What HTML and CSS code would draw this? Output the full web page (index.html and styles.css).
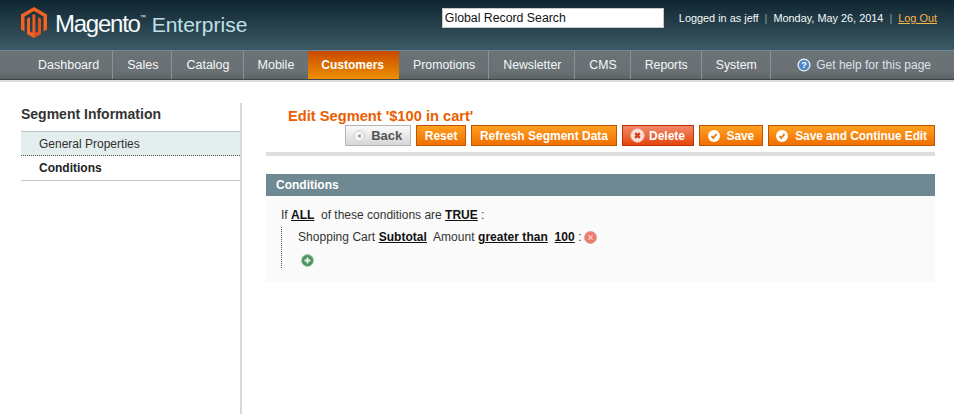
FILE: index.html
```html
<!DOCTYPE html>
<html lang="en">
<head>
<meta charset="utf-8">
<title>Edit Segment</title>
<link rel="stylesheet" href="styles.css">
</head>
<body>
<header class="header">
  <div class="brand">
    <svg class="logo" width="26" height="31" viewBox="0 0 26 31">
      <path fill="#f26322" d="M13 0 L26 7.5 V22.5 L22.5 24.5 V9.5 L13 4 L3.5 9.5 V24.5 L0 22.5 V7.5 Z"/>
      <path fill="#f26322" d="M11.5 7.8 L13 7 V31 L6 27 V11.8 L9 10 V24.5 L11.5 26 Z"/>
      <path fill="#dd5518" d="M13 7 L14.5 7.8 V26 L17 24.5 V10 L20 11.8 V27 L13 31 Z"/>
    </svg>
    <span class="brand-name">Magento<sup class="tm">™</sup></span>
    <span class="brand-sub">Enterprise</span>
  </div>
  <div class="header-right">
    <div class="search">Global Record Search</div>
    <div class="userinfo">
      <span>Logged in as jeff</span><span class="sep">|</span><span>Monday, May 26, 2014</span><span class="sep">|</span><a class="logout" href="#">Log Out</a>
    </div>
  </div>
</header>
<nav class="nav">
  <ul class="menu">
    <li class="item">Dashboard</li>
    <li class="item">Sales</li>
    <li class="item">Catalog</li>
    <li class="item item-plain">Mobile</li>
    <li class="item active">Customers</li>
    <li class="item">Promotions</li>
    <li class="item">Newsletter</li>
    <li class="item">CMS</li>
    <li class="item">Reports</li>
    <li class="item">System</li>
  </ul>
  <a class="help" href="#">
    <svg width="14" height="14" viewBox="0 0 14 14"><circle cx="7" cy="7" r="6.5" fill="#e8f0f8"/><circle cx="7" cy="7" r="5.2" fill="#4f86c6"/><text x="7" y="10.2" class="help-q" text-anchor="middle">?</text></svg>
    <span>Get help for this page</span>
  </a>
</nav>
<main class="page">
  <aside class="side">
    <h3 class="side-title">Segment Information</h3>
    <ul class="tabs">
      <li class="tab tab-first">General Properties</li>
      <li class="tab tab-on">Conditions</li>
    </ul>
  </aside>
  <section class="content">
    <div class="head">
      <h3 class="title">Edit Segment '$100 in cart'</h3>
      <div class="actions">
        <button class="btn btn-back"><svg width="14" height="14" viewBox="0 0 14 14"><circle cx="7" cy="7" r="6" fill="#f4f4f4" stroke="#c4c4c4"/><path d="M8.5 4.7V9.3L5 7Z" fill="#888"/></svg><span>Back</span></button>
        <button class="btn btn-reset">Reset</button>
        <button class="btn">Refresh Segment Data</button>
        <button class="btn btn-del"><svg width="15" height="15" viewBox="0 0 15 15"><circle cx="7.5" cy="7.5" r="6.7" fill="#fbe3da" stroke="#f6b7a0"/><path d="M5.2 5.2L9.8 9.8M9.8 5.2L5.2 9.8" stroke="#d6401c" stroke-width="2.4"/></svg><span>Delete</span></button>
        <button class="btn btn-save btn-save-short"><svg width="12" height="12" viewBox="0 0 12 12"><circle cx="6" cy="6" r="6" fill="#fff"/><path d="M3.5 6L5.3 8L8.5 4" fill="none" stroke="#e8780c" stroke-width="1.8"/></svg><span>Save</span></button>
        <button class="btn btn-save"><svg width="12" height="12" viewBox="0 0 12 12"><circle cx="6" cy="6" r="6" fill="#fff"/><path d="M3.5 6L5.3 8L8.5 4" fill="none" stroke="#e8780c" stroke-width="1.8"/></svg><span>Save and Continue Edit</span></button>
      </div>
    </div>
    <div class="panel-head">Conditions</div>
    <div class="panel-body">
      <p class="rule">If <b class="opt">ALL</b>&nbsp; of these conditions are <b class="opt">TRUE</b> :</p>
      <div class="nested">
        <p class="rule rule-sub">Shopping Cart <b class="opt">Subtotal</b>&nbsp; Amount <b class="opt">greater than</b>&nbsp; <b class="opt">100</b> : <svg class="rm" width="13" height="13" viewBox="0 0 13 13"><circle cx="6.5" cy="6.5" r="6" fill="#ee7a6c" stroke="#d9a49c"/><path d="M4.4 4.4L8.6 8.6M8.6 4.4L4.4 8.6" stroke="#fbdcd6" stroke-width="1.2"/></svg></p>
        <svg class="add" width="13" height="13" viewBox="0 0 13 13"><circle cx="6.5" cy="6.5" r="6" fill="#4f9460" stroke="#a9c9ae"/><path d="M6.5 3.5V9.5M3.5 6.5H9.5" stroke="#eaf5ec" stroke-width="1.8"/></svg>
      </div>
    </div>
  </section>
</main>
</body>
</html>
```

FILE: styles.css
```css
* { box-sizing: border-box; }
html, body { margin: 0; padding: 0; }
body {
  width: 954px;
  height: 414px;
  overflow: hidden;
  background: #fff;
  font-family: "Liberation Sans", Arial, sans-serif;
  font-size: 12px;
  color: #2f2f2f;
  display: flex;
  flex-direction: column;
}
.header {
  height: 50px;
  flex: none;
  background: linear-gradient(#0f2630, #3c5a66);
  display: flex;
  justify-content: space-between;
  padding: 7px 17px 0 21px;
}
.brand { display: flex; align-items: flex-start; }
.logo { flex: none; }
.brand-name {
  color: #f5fbfd;
  font-size: 24px;
  letter-spacing: -1.25px;
  line-height: 30px;
  margin: 2px 0 0 8px;
}
.tm { font-size: 6px; vertical-align: 13px; line-height: 0; letter-spacing: 0; }
.brand-sub {
  color: #bfe0e8;
  font-size: 21px;
  line-height: 30px;
  margin: 3px 0 0 6px;
}
.header-right { display: flex; align-items: flex-start; }
.search {
  width: 222px;
  height: 20px;
  margin-top: 1px;
  background: #fff;
  border: 1px solid #c8c8c8;
  color: #111;
  font-size: 12.3px;
  line-height: 18px;
  padding-left: 2px;
}
.userinfo {
  margin: 4px 0 0 15px;
  display: flex;
  color: #f4f8f9;
  font-size: 10.9px;
  line-height: 14px;
}
.sep { color: #8aa0a8; margin: 0 6px; }
.logout { color: #f7b54a; }
.nav {
  height: 30px;
  flex: none;
  background: linear-gradient(#6a7276 70%, #5c6367);
  border-top: 1px solid #6f8a94;
  border-bottom: 1px solid #3f4447;
  box-shadow: 0 2px 0 #dcdcdc;
  display: flex;
  justify-content: space-between;
}
.menu {
  list-style: none;
  margin: 0;
  padding: 0 0 0 24px;
  display: flex;
}
.item {
  color: #f5f7f7;
  font-size: 12.5px;
  line-height: 28px;
  padding: 0 13px 0 14px;
  border-right: 1px solid #8a9296;
}
.active ~ .item { font-size: 12.3px; }
.item-plain { padding-right: 14px; border-right: 0; }
.active {
  background: linear-gradient(#c94a00, #ee8f00);
  color: #fff;
  font-size: 12px;
  font-weight: bold;
  padding: 0 15px 0 13px;
  border-right: 0;
}
.help {
  display: flex;
  align-items: center;
  gap: 5px;
  padding: 0 23px 0 0;
  color: #dbe3e8;
  font-size: 12px;
  text-decoration: none;
}
.help-q { font: bold 9px "Liberation Sans", sans-serif; fill: #fff; }
.page { flex: 1; display: flex; padding-top: 23px; }
.side {
  width: 242px;
  flex: none;
  padding-left: 21px;
  border-right: 2px solid #d8d8d8;
}
.side-title {
  margin: 0;
  color: #333;
  font-size: 14px;
  line-height: 18px;
  padding: 2px 0 8px;
}
.tabs { list-style: none; margin: 0; padding: 0; }
.tab {
  height: 25px;
  line-height: 25px;
  padding-left: 18px;
  font-size: 12px;
  color: #2f2f2f;
  border-bottom: 1px solid #c4c4c4;
}
.tab-first {
  background: #e5eeee;
  border-top: 1px solid #bcc4c4;
  border-bottom: 1px dotted #555;
}
.tab-on { font-weight: bold; color: #222; }
.content { flex: 1; padding: 0 19px 0 24px; }
.head {
  border-bottom: 4px solid #dedede;
  height: 53px;
}
.title {
  margin: 0;
  padding: 5px 0 0 22px;
  color: #eb5e00;
  font-size: 14.67px;
  line-height: 16px;
}
.actions {
  display: flex;
  justify-content: flex-end;
  gap: 5px;
  margin-top: 1px;
}
.btn {
  height: 21px;
  padding: 0 7.5px;
  border: 1px solid #c25400;
  background: linear-gradient(#ffa022, #f06f00);
  color: #fff;
  font: bold 12px "Liberation Sans", Arial, sans-serif;
  display: flex;
  align-items: center;
  gap: 4px;
}
.btn-back {
  width: 66px;
  padding-left: 7px;
  gap: 6px;
  border-color: #b4b4b4;
  background: linear-gradient(#fbfbfb, #d6d6d6);
  color: #555;
  font-size: 13px;
}
.btn-reset { padding: 0 8px; }
.btn-del {
  border-color: #b93200;
  background: linear-gradient(#f28a6a, #e3450d);
  padding: 0 7.5px;
}
.btn-save { padding: 0 7px; gap: 7px; }
.btn-save-short { padding: 0 8px; }
.btn-save span { letter-spacing: -0.1px; }
.panel-head {
  margin-top: 18px;
  background: #6f8992;
  color: #fff;
  font-size: 12px;
  font-weight: bold;
  line-height: 22px;
  padding-left: 10px;
}
.panel-body {
  background: #fafafa;
  height: 86px;
  padding: 12px 15px;
}
.rule { margin: 0; font-size: 12px; line-height: 14px; color: #333; }
.rule-sub { letter-spacing: 0.04px; white-space: nowrap; }
.opt { color: #111; text-decoration: underline; }
.nested {
  margin-top: 5px;
  border-left: 1px dotted #555;
  padding: 3px 0 0 16px;
  height: 41px;
}
.rm { vertical-align: -3px; margin-left: -1px; }
.add { display: block; margin: 10px 0 0 3px; }
```
